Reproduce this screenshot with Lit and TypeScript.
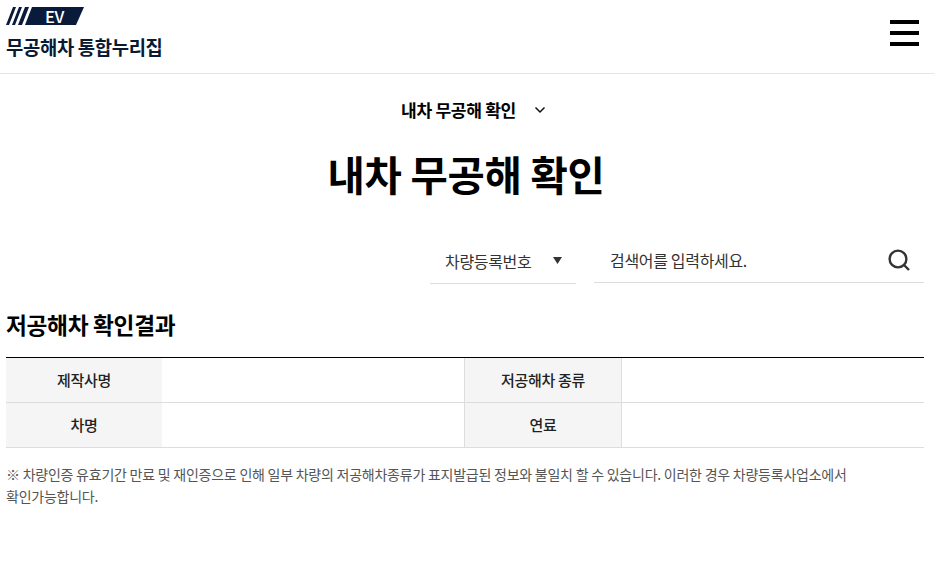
import { LitElement, html, css } from "lit";
import { customElement } from "lit/decorators.js";

@customElement("app-root")
export class AppRoot extends LitElement {
  static styles = css`
    :host { display: block; min-height: 565px; background: #fff; color: #000;
      font-family: "Noto Sans CJK KR", "Noto Sans", sans-serif; letter-spacing: -0.02em; }
    * { box-sizing: border-box; }
    header { height: 74px; border-bottom: 1px solid #e5e5e5; padding: 7px 15px 0 6px;
      display: flex; justify-content: space-between; }
    .logo { position: relative; width: 80px; height: 19px; }
    .logo svg { display: block; }
    .ev { position: absolute; left: 39px; top: 0; height: 19px; font-size: 16.5px; line-height: 19px; font-weight: 500;
      color: #fff; letter-spacing: -0.5px; }
    .brand-name { font-size: 18.8px; font-weight: 700; line-height: 26px; margin-top: 8px; color: #0a1a33; }
    .menu { display: flex; flex-direction: column; gap: 7px; width: 29px; margin-top: 13px; }
    .menu span { display: block; height: 4px; background: #000; }
    .crumb { display: flex; justify-content: center; align-items: center; gap: 18px; height: 24px; margin-top: 24px;
      font-size: 17.1px; font-weight: 700; line-height: 24px; padding-left: 13px; }
    h1 { margin: 23px 0 0; padding-right: 2px; text-align: center; font-size: 40.6px; font-weight: 700; line-height: 58px; }
    .search { display: flex; justify-content: flex-end; padding-right: 10px; margin-top: 34px; gap: 18px; }
    .select { width: 146px; height: 46px; border-bottom: 1px solid #ddd; padding: 0 14px 0 15px;
      display: flex; justify-content: space-between; align-items: center; font-size: 16px; color: #333; margin-top: 1px; }
    .input { width: 330px; height: 46px; border-bottom: 1px solid #ddd; padding: 0 14px 0 16px;
      display: flex; justify-content: space-between; align-items: center; font-size: 16px; color: #333; }
    h2 { margin: 25px 10px 0 6px; font-size: 22.7px; font-weight: 700; line-height: 32px; }
    .table { margin: 16px 10px 0 6px; border-top: 1px solid #000;
      display: grid; grid-template-columns: 156px 302px 158px 1fr; }
    .cell { height: 45px; border-bottom: 1px solid #ddd; display: flex; align-items: center; justify-content: center;
      padding-bottom: 2px; font-size: 15px; font-weight: 500; color: #222; }
    .th { background: #f5f5f5; }
    .th.mid { border-left: 1px solid #ddd; border-right: 1px solid #ddd; }
    .note { margin: 15px 10px 0 6px; max-width: 850px; font-size: 14px; line-height: 22px; color: #555;
      letter-spacing: -0.24px; word-break: keep-all; }
  `;

  render() {
    return html`
      <header>
        <div>
          <div class="logo">
            <svg width="80" height="19" viewBox="0 0 80 19">
              <polygon points="7,0 10,0 3,18 0,18" fill="#0a1a3a"/>
              <polygon points="13,0 16,0 9,18 6,18" fill="#0a1a3a"/>
              <polygon points="19,0 23,0 16,18 12,18" fill="#0a1a3a"/>
              <polygon points="26,0 78,0 70,18 19,18" fill="#0a1a3a"/>
            </svg>
            <span class="ev">EV</span>
          </div>
          <div class="brand-name">무공해차 통합누리집</div>
        </div>
        <div class="menu"><span></span><span></span><span></span></div>
      </header>
      <div class="crumb">
        <span>내차 무공해 확인</span>
        <svg width="12" height="8" viewBox="0 0 12 8"><path d="M1.5 1.5 6 6l4.5-4.5" fill="none" stroke="#111" stroke-width="1.5"/></svg>
      </div>
      <h1>내차 무공해 확인</h1>
      <div class="search">
        <div class="select">
          <span>차량등록번호</span>
          <svg width="9" height="7" viewBox="0 0 9 7"><polygon points="0,0 9,0 4.5,7" fill="#333"/></svg>
        </div>
        <div class="input">
          <span>검색어를 입력하세요.</span>
          <svg width="22" height="22" viewBox="0 0 22 22" fill="none" stroke="#333" stroke-width="2.4"><circle cx="10" cy="10" r="8.4"/><path d="M16 16l5 5"/></svg>
        </div>
      </div>
      <h2>저공해차 확인결과</h2>
      <div class="table">
        <div class="cell th">제작사명</div><div class="cell"></div>
        <div class="cell th mid">저공해차 종류</div><div class="cell"></div>
        <div class="cell th">차명</div><div class="cell"></div>
        <div class="cell th mid">연료</div><div class="cell"></div>
      </div>
      <p class="note">※ 차량인증 유효기간 만료 및 재인증으로 인해 일부 차량의 저공해차종류가 표지발급된 정보와 불일치 할 수 있습니다. 이러한 경우 차량등록사업소에서 확인가능합니다.</p>
    `;
  }
}
